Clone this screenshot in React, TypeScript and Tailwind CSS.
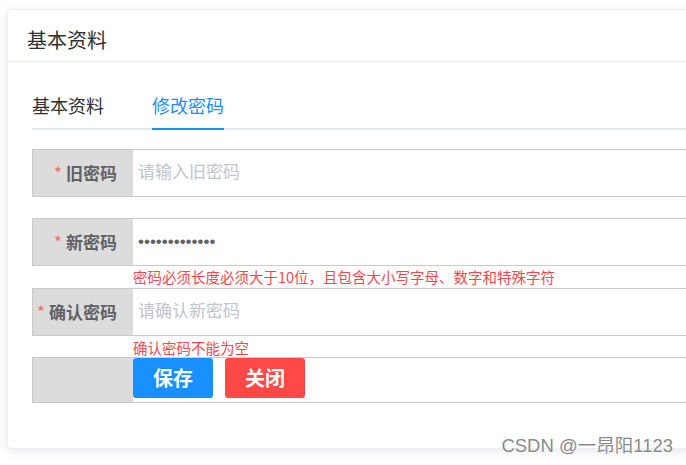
import { useState } from 'react';

const font = { fontFamily: '"Noto Sans CJK SC", "Noto Sans", sans-serif' };
const inputFont = { fontFamily: '"Liberation Sans", "Noto Sans CJK SC", sans-serif' };

type Field = {
  label: string;
  type: string;
  value?: string;
  placeholder: string;
  error?: string;
  gap: string;
};

const fields: Field[] = [
  { label: '旧密码', type: 'password', placeholder: '请输入旧密码', gap: 'h-[21px]' },
  {
    label: '新密码',
    type: 'password',
    value: 'Abc123456789!',
    placeholder: '请输入新密码',
    error: '密码必须长度必须大于10位，且包含大小写字母、数字和特殊字符',
    gap: 'h-[22px]',
  },
  {
    label: '确认密码',
    type: 'password',
    placeholder: '请确认新密码',
    error: '确认密码不能为空',
    gap: 'h-[21px] pt-[2px]',
  },
];

function FormRow({ field }: { field: Field }) {
  return (
    <div>
      <div className="flex h-[48px] border border-[#cbcbcb]">
        <div className="flex w-[100px] shrink-0 items-center justify-end bg-[#dcdcdc] pr-[16px] text-[17px] font-bold text-[#606266]">
          <span className="mr-[4px] font-normal text-[#f56c6c]">*</span>
          {field.label}
        </div>
        <input
          type={field.type}
          readOnly
          defaultValue={field.value}
          placeholder={field.placeholder}
          className="min-w-0 flex-1 bg-white px-[5px] text-[17px] text-[#606266] outline-none placeholder:text-[#c0c4cc]"
          style={inputFont}
        />
      </div>
      <div className={`flex items-center pl-[101px] text-[14.5px] leading-[18px] text-[#f5494f] ${field.gap}`}>
        {field.error}
      </div>
    </div>
  );
}

export default function App() {
  const [tab, setTab] = useState<'info' | 'password'>('password');

  return (
    <div className="relative h-[465px] w-[686px] overflow-hidden bg-white" style={font}>
      <div className="ml-[7px] mt-[9px] h-[440px] w-[720px] rounded-[4px] border border-[#ebeef5] bg-white shadow-[0_2px_12px_0_rgba(0,0,0,0.1)]">
        <div className="border-b border-[#ebeef5] px-[19px] pb-[11px] pt-[20px] text-[20px] leading-[20px] text-[#303133]">
          基本资料
        </div>

        <div className="px-[24px] pt-[20px]">
          <div className="flex border-b-2 border-[#e4e7ed]">
            <button
              onClick={() => setTab('info')}
              className={`relative h-[46px] pr-[24px] text-[18px] leading-[46px] ${
                tab === 'info' ? 'text-[#1890ff]' : 'text-[#303133]'
              }`}
            >
              基本资料
              {tab === 'info' && (
                <span className="absolute bottom-[-2px] left-0 h-[2px] w-[72px] bg-[#1890ff]" />
              )}
            </button>
            <button
              onClick={() => setTab('password')}
              className={`relative h-[46px] px-[24px] text-[18px] leading-[46px] ${
                tab === 'password' ? 'text-[#1890ff]' : 'text-[#303133]'
              }`}
            >
              修改密码
              {tab === 'password' && (
                <span className="absolute bottom-[-2px] left-[24px] h-[2px] w-[72px] bg-[#1890ff]" />
              )}
            </button>
          </div>

          <div className="mt-[19px]">
            {fields.map((f) => (
              <FormRow key={f.label} field={f} />
            ))}
            <div className="flex h-[46px] border border-[#cbcbcb]">
              <div className="w-[100px] shrink-0 bg-[#dcdcdc]" />
              <div className="flex flex-1 items-start gap-[12px] bg-white">
                <button className="h-[40px] w-[80px] rounded-[3px] bg-[#1890ff] text-[20px] font-bold text-white">
                  保存
                </button>
                <button className="h-[40px] w-[80px] rounded-[3px] bg-[#ff4949] text-[20px] font-bold text-white">
                  关闭
                </button>
              </div>
            </div>
          </div>
        </div>
      </div>

      <div
        className="absolute bottom-[8px] right-[13px] text-[18.5px] leading-[22px] text-[#8a8a8a] [text-shadow:0_0_1px_#fff,0_0_2px_#fff]"
        style={inputFont}
      >
        CSDN @一昂阳1123
      </div>
    </div>
  );
}
